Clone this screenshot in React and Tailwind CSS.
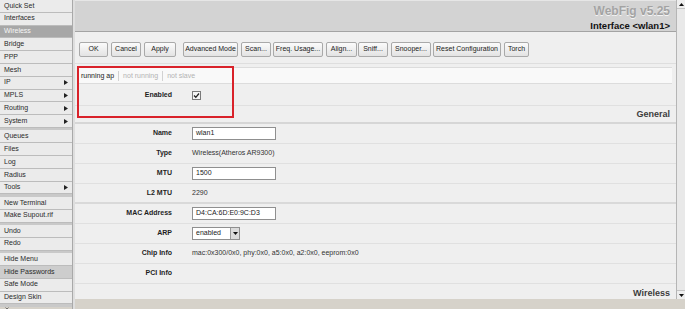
const menu = [
  [
    { name: "Quick Set" },
    { name: "Interfaces" },
    { name: "Wireless", active: true },
    { name: "Bridge" },
    { name: "PPP" },
    { name: "Mesh" },
    { name: "IP", sub: true },
    { name: "MPLS", sub: true },
    { name: "Routing", sub: true },
    { name: "System", sub: true },
  ],
  [
    { name: "Queues" },
    { name: "Files" },
    { name: "Log" },
    { name: "Radius" },
    { name: "Tools", sub: true },
  ],
  [{ name: "New Terminal" }, { name: "Make Supout.rif" }],
  [{ name: "Undo" }, { name: "Redo" }],
  [
    { name: "Hide Menu" },
    { name: "Hide Passwords", hover: true },
    { name: "Safe Mode" },
    { name: "Design Skin" },
  ],
];

const buttons = [
  { label: "OK", w: "w-[29px]", ml: "ml-0" },
  { label: "Cancel", w: "w-[30px]", ml: "ml-[3px]" },
  { label: "Apply", w: "w-[32px]", ml: "ml-[3px]" },
  { label: "Advanced Mode", w: "w-[55px]", ml: "ml-[7px]" },
  { label: "Scan...", w: "w-[30px]", ml: "ml-[3px]" },
  { label: "Freq. Usage...", w: "w-[50px]", ml: "ml-[2px]" },
  { label: "Align...", w: "w-[31px]", ml: "ml-[3px]" },
  { label: "Sniff...", w: "w-[30px]", ml: "ml-[1px]" },
  { label: "Snooper...", w: "w-[40px]", ml: "ml-[3px]" },
  { label: "Reset Configuration", w: "w-[68px]", ml: "ml-[2px]" },
  { label: "Torch", w: "w-[25px]", ml: "ml-[3px]" },
];

function Arrow() {
  return (
    <svg width="4" height="5" viewBox="0 0 4 5">
      <path d="M0 0 L4 2.5 L0 5 Z" fill="#222" />
    </svg>
  );
}

function Row({ label, children, thick }) {
  return (
    <div
      className={
        "flex h-[20px] items-center " +
        (thick ? "border-b-2 border-[#d9d9d9]" : "border-b border-[#e0e0e0]")
      }
    >
      <div className="w-[97px] text-right font-bold text-[7px] text-[#1e1e1e]">{label}</div>
      <div className="pl-[20px] text-[7px] text-[#333]">{children}</div>
    </div>
  );
}

function TextInput({ value }) {
  return (
    <div className="flex h-[13px] w-[84px] items-center border border-[#8f8f8f] bg-white px-[3px] text-[7px] text-[#222]">
      {value}
    </div>
  );
}

export default function App() {
  return (
    <div
      className="relative flex h-[309px] w-[685px] overflow-hidden bg-[#d6d2ca]"
      style={{ fontFamily: '"Liberation Sans", Arial, sans-serif' }}
    >
      {/* menu */}
      <div className="flex h-[309px] w-[73px] flex-col gap-[2.5px] bg-[#c9c9c9] border-r border-[#a9a9a9]">
        {menu.map((group, gi) => (
          <div key={gi} className="flex flex-col">
            {group.map((item) => (
              <div
                key={item.name}
                className={
                  "flex h-[12.8px] items-center justify-between border-b border-[#bcbcbc] px-[4px] text-[7px] " +
                  (item.active
                    ? "bg-[#a7a7a7] text-[#f6f6f6]"
                    : item.hover
                    ? "bg-[#cdcdcd] text-[#2a2a2a]"
                    : "bg-[#ebebeb] text-[#2a2a2a]")
                }
              >
                <span>{item.name}</span>
                {item.sub && <Arrow />}
              </div>
            ))}
          </div>
        ))}
        <div className="flex flex-1 items-center bg-[#d6d2ca] pl-[5px]">
          <svg width="4" height="4" viewBox="0 0 4 4">
            <path d="M0.5 0.5 L3.5 3.5 M3.5 0.5 L0.5 3.5" stroke="#555" strokeWidth="0.8" />
          </svg>
        </div>
      </div>

      <div className="w-[2px] bg-[#dedede]" />

      {/* main */}
      <div className="flex h-[309px] w-[601px] flex-col">
        <div className="flex h-[299px] flex-col bg-[#efefef]">
          <div className="flex h-[32px] flex-col items-end border-b border-[#a3a3a3] border-t border-t-[#e6e6e6] bg-[#d3d3d3] pr-[6px]">
            <div
              className="mt-[3px] text-[12px] font-bold leading-[14px] text-[#a3a3a3]"
              style={{ textShadow: "0 1px 0 #f4f4f4" }}
            >
              WebFig v5.25
            </div>
            <div className="mt-[3px] text-[9.5px] font-bold leading-[10px] text-[#111]">
              Interface &lt;wlan1&gt;
            </div>
          </div>

          <div className="flex h-[32px] items-start border-b border-[#dedede] pl-[4px] pt-[10px]">
            {buttons.map((b) => (
              <div
                key={b.label}
                className={
                  "flex h-[15px] items-center justify-center rounded-[2px] border border-[#a9a9a9] bg-gradient-to-b from-[#fbfbfb] to-[#e3e3e3] text-[7px] text-[#222] whitespace-nowrap " +
                  b.w +
                  " " +
                  b.ml
                }
              >
                {b.label}
              </div>
            ))}
          </div>

          <div className="ml-[2px] mr-[4px] mt-[3px] flex h-[17px] items-center border-y border-[#dcdcdc] bg-[#f9f9f9] pt-[1px] text-[7px]">
            <span className="border-r border-[#d2d2d2] px-[4px] text-[#222]">running ap</span>
            <span className="border-r border-[#d2d2d2] px-[4px] text-[#b3b3b3]">not running</span>
            <span className="px-[4px] text-[#b3b3b3]">not slave</span>
          </div>

          <div className="flex h-[22px] items-center border-b border-[#e0e0e0] pt-[2px]">
            <div className="w-[97px] text-right text-[7px] font-bold text-[#1e1e1e]">Enabled</div>
            <div className="flex pl-[20px]">
              <svg width="9" height="9" viewBox="0 0 9 9">
                <rect x="0.5" y="0.5" width="8" height="8" fill="#f4f4f4" stroke="#7a7a7a" />
                <path d="M2 4.5 L3.8 6.3 L7 2.5" fill="none" stroke="#222" strokeWidth="1.3" />
              </svg>
            </div>
          </div>

          <div className="flex h-[18px] items-end justify-end border-b-2 border-[#d6d6d6] pb-[1px] pr-[6px] text-[9px] font-bold text-[#3c3c3c]">
            General
          </div>

          <Row label="Name">
            <TextInput value="wlan1" />
          </Row>
          <Row label="Type">Wireless(Atheros AR9300)</Row>
          <Row label="MTU">
            <TextInput value="1500" />
          </Row>
          <Row label="L2 MTU" thick>
            2290
          </Row>
          <Row label="MAC Address">
            <TextInput value="D4:CA:6D:E0:9C:D3" />
          </Row>
          <Row label="ARP">
            <div className="flex h-[13px] w-[48px] items-center justify-between border border-[#8f8f8f] bg-white pl-[3px] text-[7px] text-[#222]">
              <span>enabled</span>
              <div className="flex h-[11px] w-[9px] items-center justify-center border-l border-[#9a9a9a] bg-[#dcdcdc]">
                <svg width="5" height="3" viewBox="0 0 5 3">
                  <path d="M0 0 L5 0 L2.5 3 Z" fill="#111" />
                </svg>
              </div>
            </div>
          </Row>
          <Row label="Chip Info">mac:0x300/0x0, phy:0x0, a5:0x0, a2:0x0, eeprom:0x0</Row>
          <Row label="PCI Info" />

          <div className="flex flex-1 items-end justify-end pr-[6px] text-[9px] font-bold leading-[11px] text-[#3c3c3c]">
            Wireless
          </div>
        </div>
        <div className="h-[10px] bg-[#d6d2ca]" />
      </div>

      {/* scrollbar */}
      <div className="flex h-[309px] w-[9px] flex-col">
        <div className="flex h-[299px] flex-col justify-between border-l border-[#b5b5b5] bg-[#e9e9e9]">
          <div className="flex h-[9px] items-center justify-center border-b border-[#c4c4c4] bg-[#eeeeee]">
            <svg width="5" height="3" viewBox="0 0 5 3">
              <path d="M0 3 L5 3 L2.5 0 Z" fill="#111" />
            </svg>
          </div>
          <div className="flex h-[9px] items-center justify-center border-t border-[#c4c4c4] bg-[#eeeeee]">
            <svg width="5" height="3" viewBox="0 0 5 3">
              <path d="M0 0 L5 0 L2.5 3 Z" fill="#111" />
            </svg>
          </div>
        </div>
        <div className="h-[10px] bg-[#d6d2ca]" />
      </div>

      {/* highlight frame */}
      <div className="absolute left-[77px] top-[66px] h-[52px] w-[157px] border-2 border-[#d9222a]" />
    </div>
  );
}
